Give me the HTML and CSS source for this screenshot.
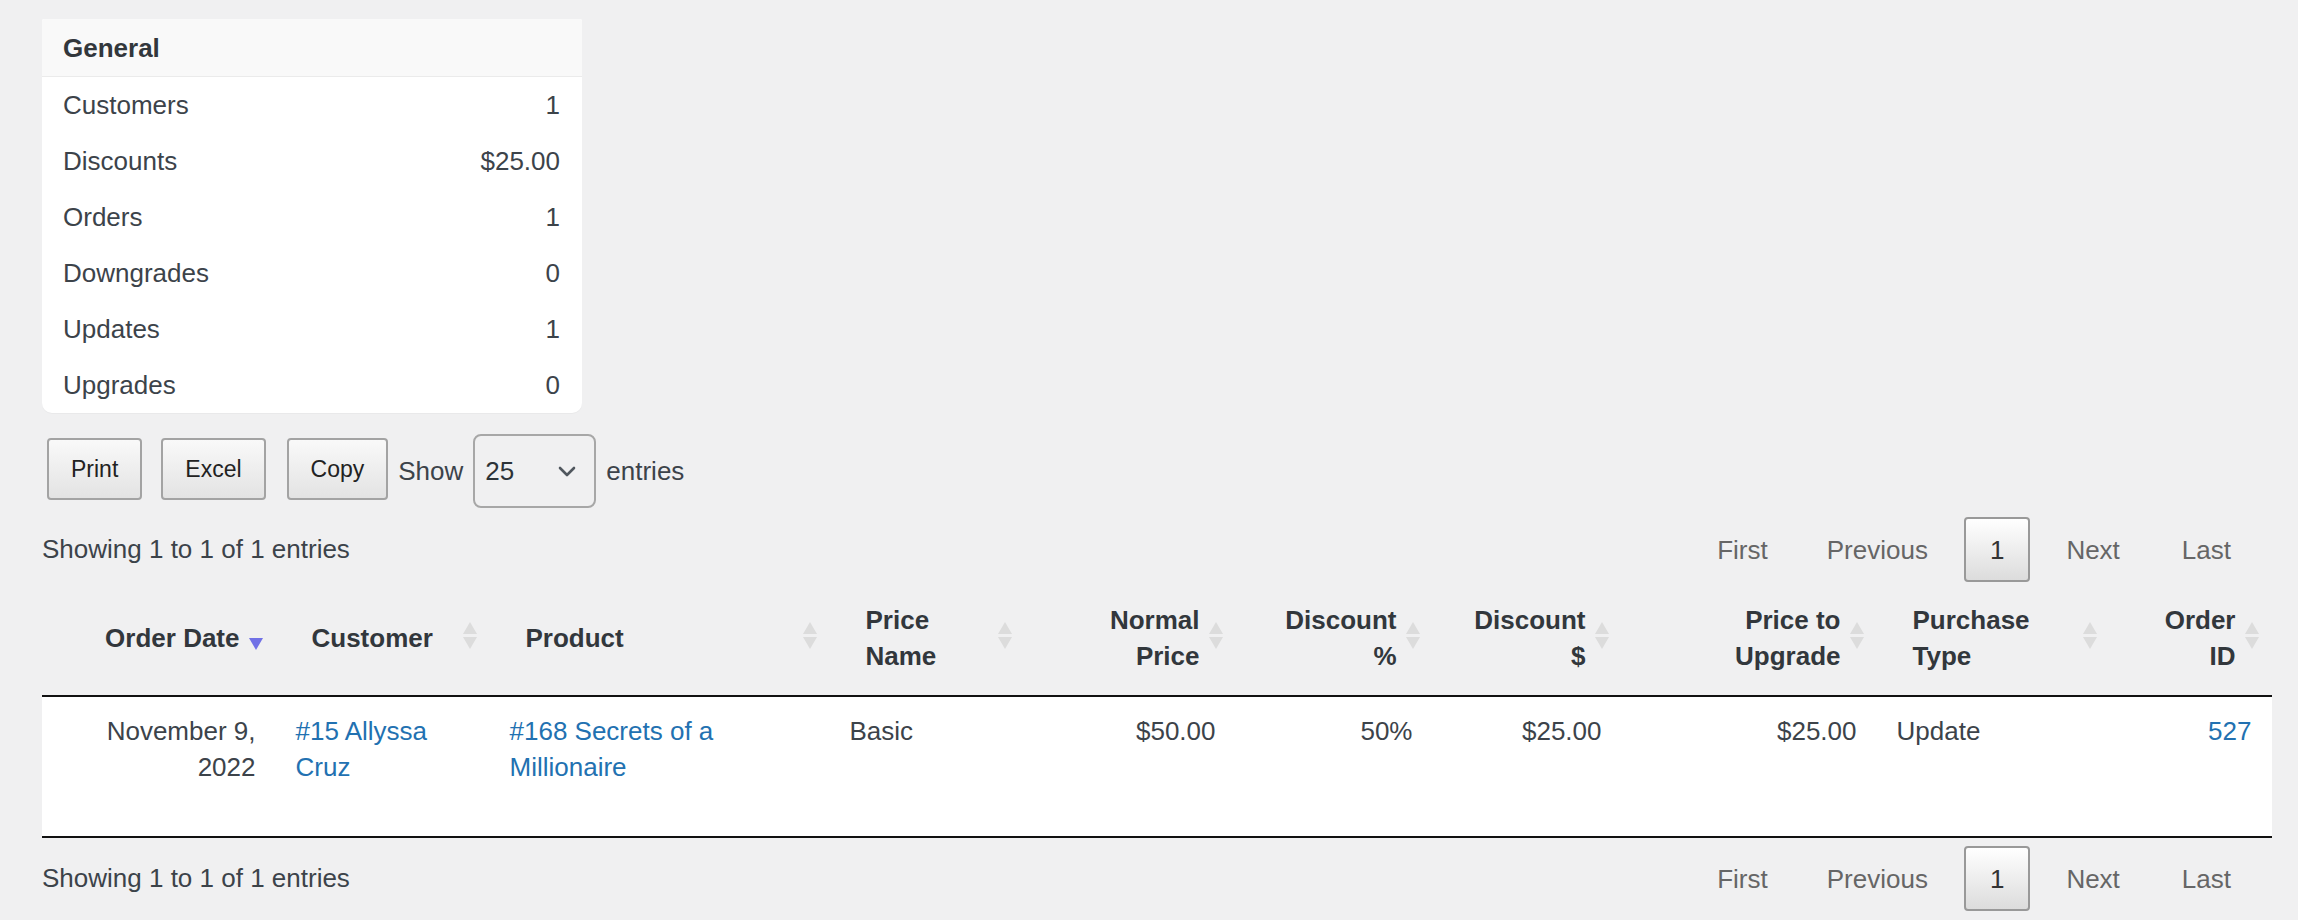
FILE: index.html
```html
<!DOCTYPE html>
<html lang="en">
<head>
<meta charset="utf-8">
<title>Report</title>
<link rel="stylesheet" href="styles.css">
</head>
<body>
<div class="page">
  <div class="card">
    <div class="card-head">General</div>
    <div class="card-row"><span>Customers</span><span>1</span></div>
    <div class="card-row"><span>Discounts</span><span>$25.00</span></div>
    <div class="card-row"><span>Orders</span><span>1</span></div>
    <div class="card-row"><span>Downgrades</span><span>0</span></div>
    <div class="card-row"><span>Updates</span><span>1</span></div>
    <div class="card-row"><span>Upgrades</span><span>0</span></div>
  </div>

  <div class="toolbar">
    <button class="dt-button">Print</button>
    <button class="dt-button">Excel</button>
    <button class="dt-button">Copy</button>
    <span class="lbl">Show</span>
    <div class="select"><span>25</span><svg width="18" height="11" viewBox="0 0 18 11"><path d="M2 2 L9 9 L16 2" fill="none" stroke="#50575e" stroke-width="2.6" stroke-linecap="round" stroke-linejoin="round"/></svg></div>
    <span class="lbl">entries</span>
  </div>

  <div class="info-row">
    <div class="info">Showing 1 to 1 of 1 entries</div>
    <div class="paginate">
      <a class="pg">First</a>
      <a class="pg">Previous</a>
      <a class="pg current">1</a>
      <a class="pg">Next</a>
      <a class="pg">Last</a>
    </div>
  </div>

  <table class="data">
    <colgroup>
      <col class="c-date"><col class="c-cust"><col class="c-prod"><col class="c-pname"><col class="c-normal"><col class="c-dpct"><col class="c-damt"><col class="c-upg"><col class="c-ptype"><col class="c-oid">
    </colgroup>
    <thead>
      <tr>
        <th class="r sorting_desc">Order Date</th>
        <th class="l sorting">Customer</th>
        <th class="l sorting">Product</th>
        <th class="l sorting">Price Name</th>
        <th class="r sorting">Normal Price</th>
        <th class="r sorting">Discount %</th>
        <th class="r sorting">Discount $</th>
        <th class="r sorting">Price to Upgrade</th>
        <th class="l sorting">Purchase Type</th>
        <th class="r sorting">Order ID</th>
      </tr>
    </thead>
    <tbody>
      <tr>
        <td class="r">November 9, 2022</td>
        <td class="l"><a class="link">#15 Allyssa Cruz</a></td>
        <td class="l"><a class="link">#168 Secrets of a Millionaire</a></td>
        <td class="l">Basic</td>
        <td class="r">$50.00</td>
        <td class="r">50%</td>
        <td class="r">$25.00</td>
        <td class="r">$25.00</td>
        <td class="l">Update</td>
        <td class="r"><a class="link">527</a></td>
      </tr>
    </tbody>
  </table>

  <div class="info-row bottom">
    <div class="info">Showing 1 to 1 of 1 entries</div>
    <div class="paginate">
      <a class="pg">First</a>
      <a class="pg">Previous</a>
      <a class="pg current">1</a>
      <a class="pg">Next</a>
      <a class="pg">Last</a>
    </div>
  </div>
</div>
</body>
</html>
```

FILE: styles.css
```css
html, body {
  margin: 0;
  padding: 0;
}
body {
  background: #f0f0f1;
  color: #3c434a;
  font-family: "Liberation Sans", Arial, sans-serif;
  font-size: 26px;
  line-height: 36.4px;
}
.page {
  padding: 19px 26px 0 42px;
}

/* Summary card */
.card {
  width: 540px;
  background: #fff;
  border-radius: 2px 2px 10px 10px;
  box-shadow: 0 1px 1px rgba(0,0,0,0.03);
  overflow: hidden;
}
.card-head {
  height: 57px;
  line-height: 58px;
  padding: 0 21px;
  background: #f9f9f9;
  border-bottom: 1px solid #ebebeb;
  font-weight: 700;
  color: #32373c;
}
.card-row {
  display: flex;
  justify-content: space-between;
  align-items: center;
  height: 56px;
  padding: 1px 22px 0 21px;
  box-sizing: border-box;
}

/* Toolbar */
.toolbar {
  display: flex;
  align-items: center;
  margin-top: 21px;
  height: 74px;
}
.dt-button {
  height: 62px;
  padding: 0 22px;
  margin-left: 5px;
  margin-right: 19px;
  border: 2px solid #a3a3a3;
  border-radius: 4px;
  background: linear-gradient(to bottom, #f9f9f9 0%, #e3e3e3 100%);
  font-family: "Liberation Sans", Arial, sans-serif;
  font-size: 23px;
  color: #222;
  margin-top: -4px;
}
.dt-button + .dt-button {
  margin-left: 0;
  margin-right: 21px;
}
.dt-button:nth-child(3) {
  margin-right: 10px;
}
.lbl {
  color: #3c434a;
}
.select {
  display: flex;
  align-items: center;
  justify-content: space-between;
  box-sizing: border-box;
  width: 123px;
  height: 74px;
  margin: 0 10px;
  padding: 0 18px 0 10px;
  border: 2px solid #a7a7a7;
  border-radius: 8px;
  color: #2c3338;
}

/* Info / pagination */
.info-row {
  display: flex;
  justify-content: space-between;
  align-items: center;
  height: 65px;
  margin-top: 9px;
}
.info-row.bottom {
  margin-top: 8px;
}
.paginate {
  display: flex;
  align-items: center;
  padding-right: 12px;
}
.pg {
  box-sizing: border-box;
  height: 65px;
  line-height: 37px;
  padding: 13px 27px;
  margin-left: 4px;
  border: 2px solid transparent;
  border-radius: 4px;
  color: #666;
}
.pg:first-child {
  padding-right: 24px;
}
.pg.current {
  border-color: #999;
  color: #333;
  padding: 13px 24px;
  margin: 0 3px 0 7px;
  background: linear-gradient(to bottom, #ffffff 0%, #dcdcdc 100%);
}

/* Table */
.data {
  table-layout: fixed;
  width: 2229.5px;
  border-collapse: separate;
  border-spacing: 0;
  border-bottom: 2px solid #111;
}
.c-date { width: 233.5px; }
.c-cust { width: 214px; }
.c-prod { width: 340px; }
.c-pname { width: 195px; }
.c-normal { width: 211px; }
.c-dpct { width: 197px; }
.c-damt { width: 189px; }
.c-upg { width: 255px; }
.c-ptype { width: 233px; }
.c-oid { width: 162px; }

.data th {
  position: relative;
  padding: 20px 36px 20px 36px;
  font-weight: 700;
  color: #32373c;
  vertical-align: middle;
  border-bottom: 2px solid #111;
}
.data .l { text-align: left; }
.data .r { text-align: right; }

.data th.sorting::before,
.data th.sorting::after,
.data th.sorting_desc::after {
  content: "";
  position: absolute;
  right: 13px;
  top: 50%;
  width: 0;
  height: 0;
  border-left: 7px solid transparent;
  border-right: 7px solid transparent;
}
.data th.sorting::before {
  margin-top: -16px;
  border-bottom: 12px solid #dcdcdc;
}
.data th.sorting::after {
  margin-top: -1px;
  border-top: 12px solid #dcdcdc;
}
.data th.sorting_desc::after {
  margin-top: 0;
  border-top: 12px solid #7171e6;
}

.data tbody tr {
  background: #fff;
}
.data td {
  padding: 16px 20px;
  height: 107px;
  vertical-align: top;
}
.link {
  color: #2271b1;
  text-decoration: none;
}
```
